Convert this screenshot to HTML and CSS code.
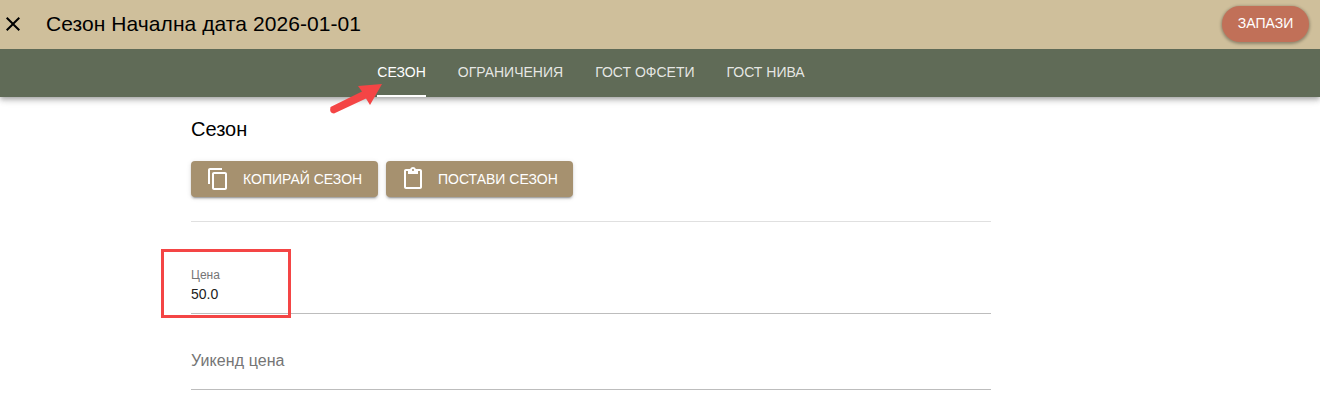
FILE: index.html
```html
<!DOCTYPE html>
<html lang="bg">
<head>
<meta charset="utf-8">
<title>Сезон</title>
<link rel="stylesheet" href="styles.css">
</head>
<body>
<div class="page">
  <header class="appbar">
    <div class="toolbar">
      <svg class="close" viewBox="0 0 24 24"><path d="M19 6.41L17.59 5 12 10.59 6.41 5 5 6.41 10.59 12 5 17.59 6.41 19 12 13.41 17.59 19 19 17.59 13.41 12z"/></svg>
      <h1 class="title">Сезон Начална дата 2026-01-01</h1>
      <button class="save">ЗАПАЗИ</button>
    </div>
    <nav class="tabs">
      <div class="tabs-inner">
        <a class="tab active"><span>СЕЗОН</span></a>
        <a class="tab"><span>ОГРАНИЧЕНИЯ</span></a>
        <a class="tab"><span>ГОСТ ОФСЕТИ</span></a>
        <a class="tab"><span>ГОСТ НИВА</span></a>
      </div>
    </nav>
  </header>
  <main class="content">
    <h2 class="heading">Сезон</h2>
    <div class="actions">
      <button class="btn">
        <svg viewBox="0 0 24 24"><path d="M16 1H4c-1.1 0-2 .9-2 2v14h2V3h12V1zm3 4H8c-1.1 0-2 .9-2 2v14c0 1.1.9 2 2 2h11c1.1 0 2-.9 2-2V7c0-1.1-.9-2-2-2zm0 16H8V7h11v14z"/></svg>
        КОПИРАЙ СЕЗОН
      </button>
      <button class="btn">
        <svg viewBox="0 0 24 24"><path d="M19 2h-4.18C14.4.84 13.3 0 12 0c-1.3 0-2.4.84-2.82 2H5c-1.1 0-2 .9-2 2v16c0 1.1.9 2 2 2h14c1.1 0 2-.9 2-2V4c0-1.1-.9-2-2-2zm-7 0c.55 0 1 .45 1 1s-.45 1-1 1-1-.45-1-1 .45-1 1-1zm7 18H5V4h2v3h10V4h2v16z"/></svg>
        ПОСТАВИ СЕЗОН
      </button>
    </div>
    <hr class="divider">
    <div class="field filled">
      <label>Цена</label>
      <div class="value">50.0</div>
    </div>
    <div class="field empty">
      <label>Уикенд цена</label>
    </div>
  </main>
  <div class="mark-box"></div>
  <svg class="mark-arrow" viewBox="0 0 60 40"><path d="M2.5 27 L34 11.5 L30 6 L54 4 L42 25 L38 18.5 L6 33.5 Q1 33 2.5 27Z"/></svg>
</div>
</body>
</html>
```

FILE: styles.css
```css
* { box-sizing: border-box; }
html, body { margin: 0; height: 100%; overflow: hidden; background: #fff; }
body { font-family: "Liberation Sans", Arial, sans-serif; color: #000; }
.page { position: relative; width: 1320px; height: 411px; overflow: hidden; }

.appbar { box-shadow: 0 2px 4px -1px rgba(0,0,0,.2), 0 4px 5px rgba(0,0,0,.14), 0 1px 10px rgba(0,0,0,.12); position: relative; }
.toolbar { height: 49px; background: #cfbf9b; display: flex; align-items: center; padding: 0 11px 1px 1px; }
.close { width: 24px; height: 24px; fill: #000; flex: none; }
.title { margin: 0 0 0 21px; font-size: 21px; font-weight: 400; line-height: 48px; letter-spacing: .07px; flex: 1; color: #000; }
.save { width: 87px; height: 36px; border: 0; border-radius: 18px; background: #c17058; color: #fff; font: 400 14px/34px "Liberation Sans", Arial, sans-serif; padding: 0 0 2px; box-shadow: 0 1px 3px 1px rgba(0,0,0,.3); }

.tabs { height: 48px; background: #606b57; }
.tabs-inner { width: 1182px; height: 48px; display: flex; justify-content: center; }
.tab { padding: 0 16px; height: 48px; color: rgba(255,255,255,.85); font-size: 14px; font-weight: 400; }
.tab span { display: block; height: 48px; line-height: 46px; }
.tab.active { color: #fff; }
.tab.active span { border-bottom: 2px solid #fff; }

.content { width: 800px; margin-left: 191px; }
.heading { margin: 0; padding-top: 20px; font-size: 20px; font-weight: 400; line-height: 24px; }
.actions { display: flex; gap: 8px; margin-top: 20px; }
.btn { height: 36px; width: 187px; display: flex; align-items: center; border: 0; border-radius: 4px; background: #a6916f; color: #fff; font: 400 14px "Liberation Sans", Arial, sans-serif; padding: 0 0 0 15px; box-shadow: 0 3px 1px -2px rgba(0,0,0,.2), 0 2px 2px rgba(0,0,0,.14), 0 1px 5px rgba(0,0,0,.12); }
.btn svg { width: 24px; height: 24px; fill: #fff; margin-right: 13px; flex: none; }
.divider { margin: 24px 0 0; border: 0; border-top: 1px solid #e0e0e0; }

.field { border-bottom: 1px solid #bdbdbd; }
.filled { height: 92px; padding-top: 46px; }
.filled label { display: block; font-size: 12px; line-height: 14px; color: #757575; }
.filled .value { font-size: 14px; line-height: 22px; color: #212121; margin-top: 1px; }
.empty { height: 76px; padding-top: 37px; }
.empty label { display: block; font-size: 16px; line-height: 20px; letter-spacing: .08px; color: #757575; }

.mark-box { position: absolute; left: 161px; top: 249px; width: 130px; height: 69px; border: 3px solid #f44545; }
.mark-arrow { position: absolute; left: 328px; top: 80px; width: 60px; height: 40px; fill: #f44545; }
```
